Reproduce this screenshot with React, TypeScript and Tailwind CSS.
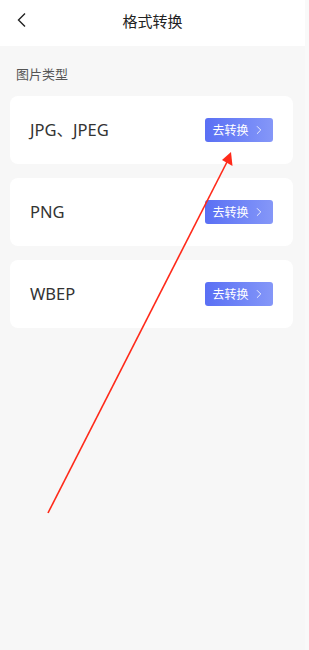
import { ChevronRight } from "lucide-react";

const TYPES = ["JPG、JPEG", "PNG", "WBEP"];

const font = { fontFamily: '"Noto Sans CJK SC", "Noto Sans", sans-serif' };
const latin = { fontFamily: '"Noto Sans", "Noto Sans CJK SC", sans-serif' };

export default function App() {
  return (
    <div className="relative h-[650px] w-[309px] overflow-hidden bg-[#f9f9f9]" style={font}>
      <div className="h-full w-[305px] bg-[#f7f7f7]">
        {/* Header */}
        <header className="relative flex h-[46px] items-center justify-center bg-white">
          <button className="absolute left-[14px] top-[10px] p-0.5" aria-label="back">
            <svg width="12" height="16" viewBox="0 0 12 16" fill="none">
              <path d="M9 1.5L2.5 8L9 14.5" stroke="#222" strokeWidth="1.4" />
            </svg>
          </button>
          <h1 className="-mt-[6px] text-[15px] leading-none text-[#222]">格式转换</h1>
        </header>

        <div className="px-[16px] pt-[19px] pb-[13px] text-[13px] leading-[18px] text-[#555]">图片类型</div>

        {/* List */}
        <div className="flex flex-col gap-[14px] pl-[10px] pr-[12px]">
          {TYPES.map((t) => (
            <div
              key={t}
              className="flex h-[68px] items-center justify-between rounded-[8px] bg-white pl-[20px] pr-[20px]"
            >
              <span className="text-[16.5px] text-[#333]" style={latin}>
                {t}
              </span>
              <button className="flex h-[24px] w-[68px] items-center justify-center gap-[3px] rounded-[3px] bg-gradient-to-r from-[#5a6ff4] to-[#8597f8] text-[12px] text-white">
                去转换
                <ChevronRight size={14} strokeWidth={1.4} />
              </button>
            </div>
          ))}
        </div>
      </div>

      {/* Red annotation arrow */}
      <svg className="pointer-events-none absolute left-0 top-0" width="309" height="650" viewBox="0 0 309 650">
        <line x1="48" y1="513" x2="228" y2="160" stroke="#ff2a1a" strokeWidth="1.6" />
        <polygon points="231,152 232.5,166 222,160" fill="#ff2a1a" />
      </svg>
    </div>
  );
}
